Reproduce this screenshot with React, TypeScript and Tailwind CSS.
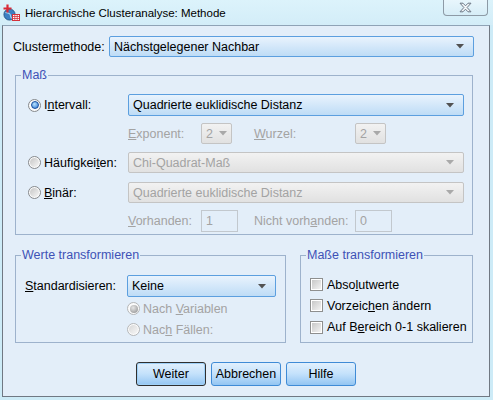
import React from "react";
import clsx from "clsx";

function Arrow({ disabled }: { disabled?: boolean }) {
  return (
    <svg width="8" height="5" viewBox="0 0 8 5" className="shrink-0">
      <path d="M0 0h8L4 4.5z" fill={disabled ? "#a9a9a9" : "#525252"} />
    </svg>
  );
}

function Combo({
  text,
  className,
  disabled,
  small,
}: {
  text: string;
  className: string;
  disabled?: boolean;
  small?: boolean;
}) {
  return (
    <div
      className={clsx(
        "flex shrink-0 items-center justify-between rounded-[2px] border pl-[4px]",
        small ? "pr-[4px]" : "pr-[9px]",
        disabled
          ? "border-[#c4c4c4] bg-linear-to-b from-[#f2f2f2] to-[#e1e1e1] text-[#a3a3a3]"
          : "border-[#5c9fdf] bg-linear-to-b from-[#e9f3fd] to-[#bedcf6] text-black",
        className
      )}
    >
      <span>{text}</span>
      <Arrow disabled={disabled} />
    </div>
  );
}

function Radio({ checked, disabled }: { checked?: boolean; disabled?: boolean }) {
  return (
    <span
      className={clsx(
        "flex h-[13px] w-[13px] shrink-0 items-center justify-center rounded-full border bg-[#fbfbfb]",
        disabled ? "border-[#b4b6b8]" : "border-[#85888c]"
      )}
    >
      {checked ? (
        <span
          className={
            disabled
              ? "h-[8px] w-[8px] rounded-full bg-[radial-gradient(circle_at_40%_35%,#e6e6e6,#8c8c8c)]"
              : "h-[8px] w-[8px] rounded-full border border-[#174f9e] bg-[radial-gradient(circle_at_40%_35%,#b9e4ff,#2a74d2)]"
          }
        />
      ) : (
        <span
          className={
            disabled
              ? "h-[9px] w-[9px] rounded-full bg-linear-to-br from-[#d8d8d8] to-[#f7f7f7]"
              : "h-[9px] w-[9px] rounded-full bg-linear-to-br from-[#c6c6c6] to-[#f6f6f6]"
          }
        />
      )}
    </span>
  );
}

function Check() {
  return (
    <span className="flex h-[13px] w-[13px] shrink-0 items-center justify-center border border-[#8e8f8f] bg-white">
      <span className="h-[9px] w-[9px] bg-linear-to-br from-[#c8c8c8] to-[#f3f3f3]" />
    </span>
  );
}

function Btn({ label, isDefault }: { label: string; isDefault?: boolean }) {
  return (
    <div
      className={clsx(
        "flex h-[24px] w-[70px] items-center justify-center rounded-[3px] border bg-linear-to-b from-[#e2f0fd] via-[#c3e1fb] to-[#93c5f2] text-black",
        isDefault
          ? "border-[#2f2f2f] shadow-[inset_0_0_0_1px_#9fd0f7]"
          : "border-[#3f8bd6]"
      )}
    >
      {label}
    </div>
  );
}

function Group({
  legend,
  className,
  children,
}: {
  legend: string;
  className: string;
  children: React.ReactNode;
}) {
  return (
    <div className={clsx("relative shrink-0 border border-[#9db2cc]", className)}>
      <span className="absolute left-[5px] top-[-8px] bg-[#e3eef9] px-[1px] leading-[14px] text-[#3e52b6]">
        {legend}
      </span>
      {children}
    </div>
  );
}

function AppIcon() {
  return (
    <svg width="17" height="17" viewBox="0 0 17 17" className="shrink-0">
      <circle cx="6.5" cy="10.5" r="5.6" fill="#3d7fc2" stroke="#1e4c80" strokeWidth="0.8" />
      <path d="M2.5 8.5c1.6.4 3 .3 4.2 1.4s.4 3 2 4.3" stroke="#a9d6f2" fill="none" strokeWidth="1.1" />
      <rect x="9.5" y="10.5" width="7" height="6" fill="#fff" stroke="#d4323c" />
      <path d="M9.5 12.5h7M9.5 14.5h7M11.8 10.5v6M14.2 10.5v6" stroke="#d4323c" strokeWidth="0.8" />
      <path d="M4.5 0.5v8M0.5 4.5h8" stroke="#d92a36" strokeWidth="2.2" />
    </svg>
  );
}

export default function App() {
  return (
    <div className="flex h-[400px] w-[493px] flex-col overflow-hidden bg-[#cdebf7] font-['Liberation_Sans',Arial,sans-serif] text-[12.5px] leading-[14px] text-black">
      {/* title bar */}
      <div className="flex h-[25px] shrink-0 items-center bg-linear-to-b from-[#dcf3fb] to-[#d3edf8] pl-[3px]">
        <AppIcon />
        <span className="ml-[5px] text-[11.5px]">Hierarchische Clusteranalyse: Methode</span>
        <div className="mr-[5px] ml-auto flex h-[16px] w-[45px] items-center justify-center self-start rounded-b-[4px] border border-t-0 border-[#8d9aa6] bg-linear-to-b from-[#e8f6fc] to-[#d6edf7]">
          <svg width="13" height="11" viewBox="0 0 13 11">
            <path
              d="M1 1.2h3l2.5 2.6L9 1.2h3L8.1 5.5 12 9.8H9L6.5 7.2 4 9.8H1l3.9-4.3z"
              fill="#f4f7f9"
              stroke="#6c7886"
              strokeWidth="1"
              strokeLinejoin="round"
            />
          </svg>
        </div>
      </div>

      {/* dialog body */}
      <div className="ml-[2px] flex h-[372px] w-[488px] shrink-0 flex-col border border-[#707883] border-t-[#8fa3b6] bg-[#e3eef9]">
        <div className="mt-[10px] flex items-center pl-[10px]">
          <span className="w-[96px] shrink-0">
            Cluster<span className="underline">m</span>ethode:
          </span>
          <Combo text="Nächstgelegener Nachbar" className="h-[21px] w-[365px]" />
        </div>

        <Group legend="Maß" className="ml-[12px] mt-[18px] h-[160px] w-[458px]">
          <div className="flex flex-col">
            <div className="mt-[18px] flex h-[22px] items-center pl-[12px]">
              <div className="flex w-[100px] shrink-0 items-center gap-[3px]">
                <Radio checked />
                <span>
                  I<span className="underline">n</span>tervall:
                </span>
              </div>
              <Combo text="Quadrierte euklidische Distanz" className="h-[22px] w-[336px]" />
            </div>

            <div className="mt-[7px] flex h-[21px] items-center pl-[112px] text-[#a3a3a3]">
              <span className="w-[73px] shrink-0">
                <span className="underline">E</span>xponent:
              </span>
              <Combo text="2" small disabled className="h-[21px] w-[31px]" />
              <span className="ml-[22px] w-[101px] shrink-0">
                <span className="underline">W</span>urzel:
              </span>
              <Combo text="2" small disabled className="h-[21px] w-[31px]" />
            </div>

            <div className="mt-[8px] flex h-[21px] items-center pl-[12px]">
              <div className="flex w-[100px] shrink-0 items-center gap-[3px]">
                <Radio />
                <span>
                  Häufigkei<span className="underline">t</span>en:
                </span>
              </div>
              <Combo text="Chi-Quadrat-Maß" disabled className="h-[21px] w-[336px]" />
            </div>

            <div className="mt-[9px] flex h-[21px] items-center pl-[12px]">
              <div className="flex w-[100px] shrink-0 items-center gap-[3px]">
                <Radio />
                <span>
                  <span className="underline">B</span>inär:
                </span>
              </div>
              <Combo text="Quadrierte euklidische Distanz" disabled className="h-[21px] w-[336px]" />
            </div>

            <div className="mt-[7px] flex h-[22px] items-center pl-[112px] text-[#a3a3a3]">
              <span className="w-[73px] shrink-0">
                <span className="underline">V</span>orhanden:
              </span>
              <div className="flex h-[22px] w-[37px] shrink-0 items-center border border-[#c2c8ce] pl-[4px]">1</div>
              <span className="ml-[16px] w-[101px] shrink-0">
                Nicht vorh<span className="underline">a</span>nden:
              </span>
              <div className="flex h-[22px] w-[37px] shrink-0 items-center border border-[#c2c8ce] pl-[4px]">0</div>
            </div>
          </div>
        </Group>

        <div className="mt-[20px] flex">
          <Group legend="Werte transformieren" className="ml-[12px] h-[88px] w-[271px]">
            <div className="flex flex-col">
              <div className="mt-[19px] flex h-[22px] items-center pl-[9px]">
                <span className="w-[102px] shrink-0">
                  <span className="underline">S</span>tandardisieren:
                </span>
                <Combo text="Keine" className="h-[22px] w-[149px]" />
              </div>
              <div className="mt-[5px] flex h-[13px] items-center gap-[3px] pl-[111px] text-[#a3a3a3]">
                <Radio checked disabled />
                <span>
                  Nach <span className="underline">V</span>ariablen
                </span>
              </div>
              <div className="mt-[8px] flex h-[13px] items-center gap-[3px] pl-[111px] text-[#a3a3a3]">
                <Radio disabled />
                <span>
                  Nac<span className="underline">h</span> Fällen:
                </span>
              </div>
            </div>
          </Group>

          <Group legend="Maße transformieren" className="ml-[14px] h-[88px] w-[173px]">
            <div className="mt-[18px] flex flex-col pl-[9px]">
              <div className="flex h-[21px] items-center gap-[4px]">
                <Check />
                <span>
                  Abso<span className="underline">l</span>utwerte
                </span>
              </div>
              <div className="flex h-[21px] items-center gap-[4px]">
                <Check />
                <span>
                  Vorzeic<span className="underline">h</span>en ändern
                </span>
              </div>
              <div className="flex h-[22px] items-center gap-[4px]">
                <Check />
                <span>
                  Auf B<span className="underline">e</span>reich 0-1 skalieren
                </span>
              </div>
            </div>
          </Group>
        </div>

        <div className="mt-[19px] flex justify-center gap-[5px]">
          <Btn label="Weiter" isDefault />
          <Btn label="Abbrechen" />
          <Btn label="Hilfe" />
        </div>
      </div>
    </div>
  );
}
